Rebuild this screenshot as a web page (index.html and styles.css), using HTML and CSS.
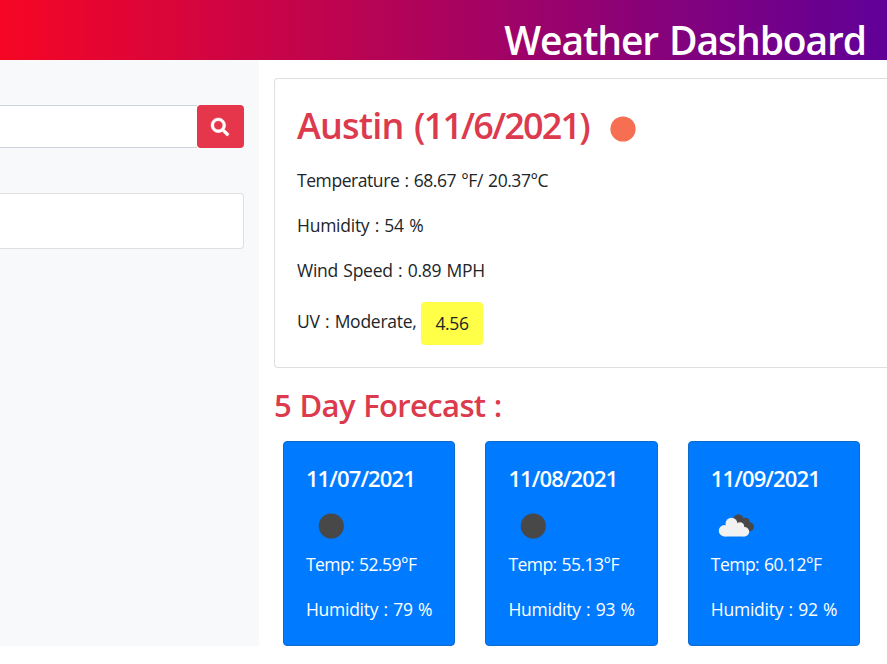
FILE: index.html
```html
<!DOCTYPE html>
<html lang="en">
<head>
<meta charset="utf-8">
<title>Weather Dashboard</title>
<link rel="stylesheet" href="styles.css">
</head>
<body>
<header class="topbar"><h1 class="brand">Weather Dashboard</h1></header>
<div class="layout">
  <aside class="sidebar">
    <form class="search">
      <div class="search-input"></div>
      <button class="search-button" type="button" aria-label="Search">
        <svg class="search-icon" viewBox="0 0 512 512"><path fill="#fff" stroke="#fff" stroke-width="12" d="M505 442.700L405.300 343c-4.500-4.500-10.600-7-17-7H372c27.600-35.300 44-79.700 44-128C416 93.100 322.900 0 208 0S0 93.100 0 208s93.100 208 208 208c48.300 0 92.700-16.400 128-44v16.300c0 6.400 2.500 12.500 7 17l99.700 99.700c9.400 9.400 24.600 9.400 33.900 0l28.300-28.300c9.400-9.400 9.400-24.600.1-34zM208 336c-70.700 0-128-57.200-128-128 0-70.700 57.200-128 128-128 70.700 0 128 57.200 128 128 0 70.700-57.200 128-128 128z"/></svg>
      </button>
    </form>
    <div class="history"></div>
  </aside>
  <main class="main">
    <section class="current">
      <h2 class="city"><span class="city-name">Austin <span class="city-date">(11/6/2021)</span></span><svg class="sun" viewBox="0 0 26 26"><circle cx="13" cy="13" r="12.600" fill="#f76f52"/></svg></h2>
      <p class="line"><span class="t-temp">Temperature : 68.67 °F/ 20.37°C</span></p>
      <p class="line"><span class="t-hum">Humidity : 54 %</span></p>
      <p class="line"><span class="t-wind">Wind Speed : 0.89 MPH</span></p>
      <p class="line uv"><span class="t-uv">UV : Moderate,</span><span class="badge">4.56</span></p>
    </section>
    <h3 class="heading"><span>5 Day Forecast :</span></h3>
    <section class="forecast">
      <article class="day">
        <h4 class="date">11/07/2021</h4>
        <svg class="sky" viewBox="0 0 50 36"><circle cx="25.300" cy="18" r="12.600" fill="#484848"/></svg>
        <p class="stat temp">Temp: 52.59°F</p>
        <p class="stat">Humidity : 79 %</p>
      </article>
      <article class="day">
        <h4 class="date">11/08/2021</h4>
        <svg class="sky" viewBox="0 0 50 36"><circle cx="25.300" cy="18" r="12.600" fill="#484848"/></svg>
        <p class="stat temp">Temp: 55.13°F</p>
        <p class="stat">Humidity : 93 %</p>
      </article>
      <article class="day">
        <h4 class="date">11/09/2021</h4>
        <svg class="sky" viewBox="0 0 50 36">
          <g fill="#484848"><circle cx="27.500" cy="11.500" r="5.200"/><circle cx="34.500" cy="14" r="4.300"/><circle cx="38.500" cy="18.800" r="4.500"/><path d="M24 13h12l4 10H28z"/></g>
          <g fill="#f2f2f2"><circle cx="13.500" cy="22.800" r="5.700"/><circle cx="20.500" cy="15.800" r="6"/><circle cx="29" cy="18.500" r="4.200"/><circle cx="33.500" cy="23.800" r="4.700"/><path d="M15 17h14l4.500 11.500h-20z"/></g>
        </svg>
        <p class="stat temp">Temp: 60.12°F</p>
        <p class="stat">Humidity : 92 %</p>
      </article>
    </section>
  </main>
</div>
</body>
</html>
```
FILE: styles.css
```css
* { box-sizing: border-box; }
body {
  margin: 0;
  overflow: hidden;
  background: #fff;
  color: #212529;
  font-family: "Open Sans", "Noto Sans", sans-serif;
  font-size: 17.5px;
  font-weight: 370;
  line-height: 27px;
}
h1, h2, h3, h4, p { margin: 0; }
.topbar {
  height: 60px;
  padding: 16px 21px 0 0;
  background: linear-gradient(90deg, #f60624, #600098);
  display: flex;
  justify-content: flex-end;
}
.brand { color: #fff; font-size: 39px; font-weight: 600; line-height: 48px; white-space: nowrap; letter-spacing: -1.1px; word-spacing: 2px; }
.layout { display: flex; height: 586px; }
.sidebar { flex: none; width: 259px; background: #f8f9fb; padding: 45px 15px 0 0; }
.search { display: flex; height: 43px; }
.search-input { flex: 1; background: #fff; border: 1px solid #ced4da; border-width: 1px 0; }
.search-button { width: 47px; border: 0; border-radius: 4px; background: #e6364b; padding: 0 1px 0 0; display: flex; align-items: center; justify-content: center; }
.search-icon { width: 18px; height: 18px; overflow: visible; }
.history { margin-top: 45px; height: 56px; background: #fff; border: 1px solid #dfdfdf; border-left: 0; border-radius: 0 4px 4px 0; }
.main { flex: 1; min-width: 0; padding: 18px 0 0 15px; }
.current { height: 290px; border: 1px solid #dfdfdf; border-right: 0; border-radius: 4px 0 0 4px; padding: 24px 22px 0; white-space: nowrap; }
.city { display: flex; align-items: center; height: 46px; margin-bottom: 18px; color: #dc3a4d; font-size: 36px; font-weight: 580; line-height: 46px; }
.city-name { width: 290px; letter-spacing: -0.8px; word-spacing: 2px; }
.city-date { letter-spacing: -1.850px; }
.sun { width: 26px; height: 26px; margin: 6px 0 0 23px; }
.line { height: 27px; margin-bottom: 18px; word-spacing: 1px; }
.t-temp { letter-spacing: -0.430px; }
.t-hum, .t-wind, .t-uv { letter-spacing: -0.250px; }
.uv { display: flex; height: 43px; }
.t-uv { width: 124px; line-height: 39px; }
.badge { width: 62px; height: 43px; border-radius: 4px; background: #ffff47; text-align: center; line-height: 43px; letter-spacing: -0.4px; }
.heading { margin: 18px 0 17px; color: #dc3a4d; font-size: 31px; font-weight: 580; line-height: 38px; letter-spacing: -0.650px; word-spacing: 1px; }
.forecast { display: flex; gap: 30.300px; padding-left: 8.900px; }
.day { flex: none; width: 172.200px; height: 205px; padding: 22px 22px 0; border: 1px solid #0c6bcf; border-radius: 4px; background: #007bff; color: #fff; white-space: nowrap; }
.date { font-size: 22px; font-weight: 600; line-height: 28px; letter-spacing: -0.880px; }
.sky { display: block; width: 50px; height: 36px; margin: 16px 0 7px; }
.stat { height: 27px; letter-spacing: -0.250px; word-spacing: 1px; }
.temp { margin-bottom: 18px; letter-spacing: -0.550px; }
```
